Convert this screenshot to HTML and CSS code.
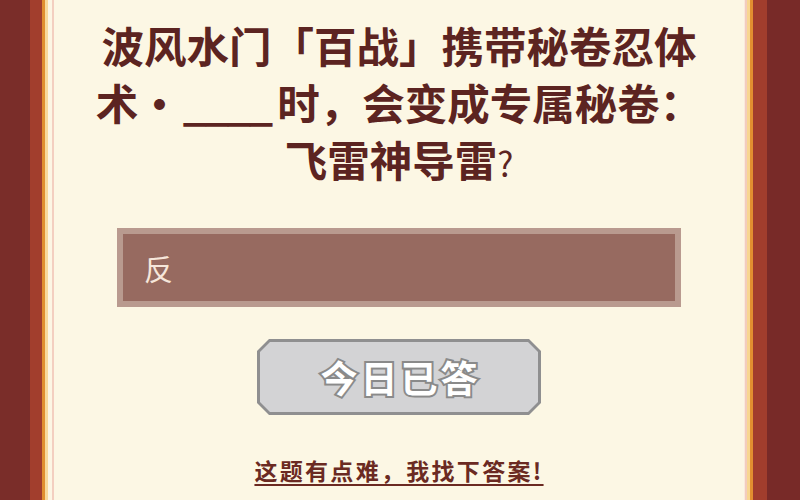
FILE: index.html
```html
<!DOCTYPE html>
<html lang="zh">
<head>
<meta charset="utf-8">
<link rel="stylesheet" href="styles.css">
</head>
<body>
<div class="frame">
  <div class="edge edge-left"></div>
  <main class="panel">
    <h1 class="question">波风水门「百战」携带秘卷忍体术・<span class="blank">____</span>时，会变成专属秘卷：飞雷神导雷<span class="qmark">?</span></h1>
    <div class="answer-box"><span class="answer-text">反</span></div>
    <div class="btn-outer"><div class="btn-inner"><span class="btn-text">今日已答</span></div></div>
    <a class="hint-link">这题有点难，我找下答案!</a>
  </main>
  <div class="edge edge-right"></div>
</div>
</body>
</html>
```
FILE: styles.css
```css
html, body {
  margin: 0;
  padding: 0;
  width: 800px;
  height: 500px;
  overflow: hidden;
}
body {
  font-family: "Noto Sans CJK SC", "Noto Sans", sans-serif;
}
.frame {
  display: flex;
  width: 800px;
  height: 500px;
}
.edge-left {
  width: 54px;
  flex: none;
  background: linear-gradient(to right,
    #7a2d29 0, #7a2d29 30px,
    #a23e2d 30px, #a23e2d 42px,
    #e08f30 42px, #e08f30 45px,
    #f8d99c 45px, #f8d99c 48px,
    #fcf6e4 48px, #fcf6e4 52px,
    #f3cfc0 52px, #f3cfc0 54px);
}
.edge-right {
  width: 56px;
  flex: none;
  background: linear-gradient(to right,
    #fbe9dc 0, #fbe9dc 1px,
    #f2cdbd 1px, #f2cdbd 3px,
    #f8d690 3px, #f8d690 6px,
    #e28f30 6px, #e28f30 9px,
    #a13d2d 9px, #a13d2d 23px,
    #782a28 23px, #782a28 56px);
}
.panel {
  flex: 1;
  background-color: #fcf7e4;
  display: flex;
  flex-direction: column;
  align-items: center;
}
.question {
  margin: 16px 0 0;
  width: 610px;
  font-size: 42.5px;
  line-height: 57px;
  font-weight: 700;
  color: #5c2421;
  text-align: center;
}
.blank {
  letter-spacing: -2px;
  margin: 0 6px 0 2px;
  line-height: 1;
}
.qmark {
  font-weight: 400;
  font-size: 34px;
  line-height: 1;
}
.answer-box {
  margin-top: 41px;
  box-sizing: border-box;
  width: 564px;
  height: 79px;
  border: 6px solid #b99a8f;
  background: #976a60;
  display: flex;
  align-items: center;
  padding-left: 21px;
}
.answer-text {
  font-size: 29px;
  color: #f6e6da;
  font-weight: 400;
}
.btn-outer {
  margin-top: 32px;
  width: 284px;
  height: 76px;
  background: #8f8f90;
  clip-path: polygon(12px 0, 272px 0, 284px 12px, 284px 64px, 272px 76px, 12px 76px, 0 64px, 0 12px);
  display: flex;
  padding: 3px;
  box-sizing: border-box;
}
.btn-inner {
  flex: 1;
  background: #d3d3d5;
  clip-path: polygon(10px 0, 268px 0, 278px 10px, 278px 60px, 268px 70px, 10px 70px, 0 60px, 0 10px);
  display: flex;
  align-items: center;
  justify-content: center;
}
.btn-text {
  font-size: 37px;
  font-weight: 700;
  letter-spacing: 3px;
  color: #ffffff;
  -webkit-text-stroke: 4px #8a8a8a;
  paint-order: stroke fill;
  margin-left: 3px;
}
.hint-link {
  margin-top: 38px;
  font-size: 23px;
  font-weight: 700;
  letter-spacing: 2.3px;
  color: #6b2a22;
  text-decoration: underline;
  text-underline-offset: 4px;
  text-decoration-thickness: 2px;
}
```
